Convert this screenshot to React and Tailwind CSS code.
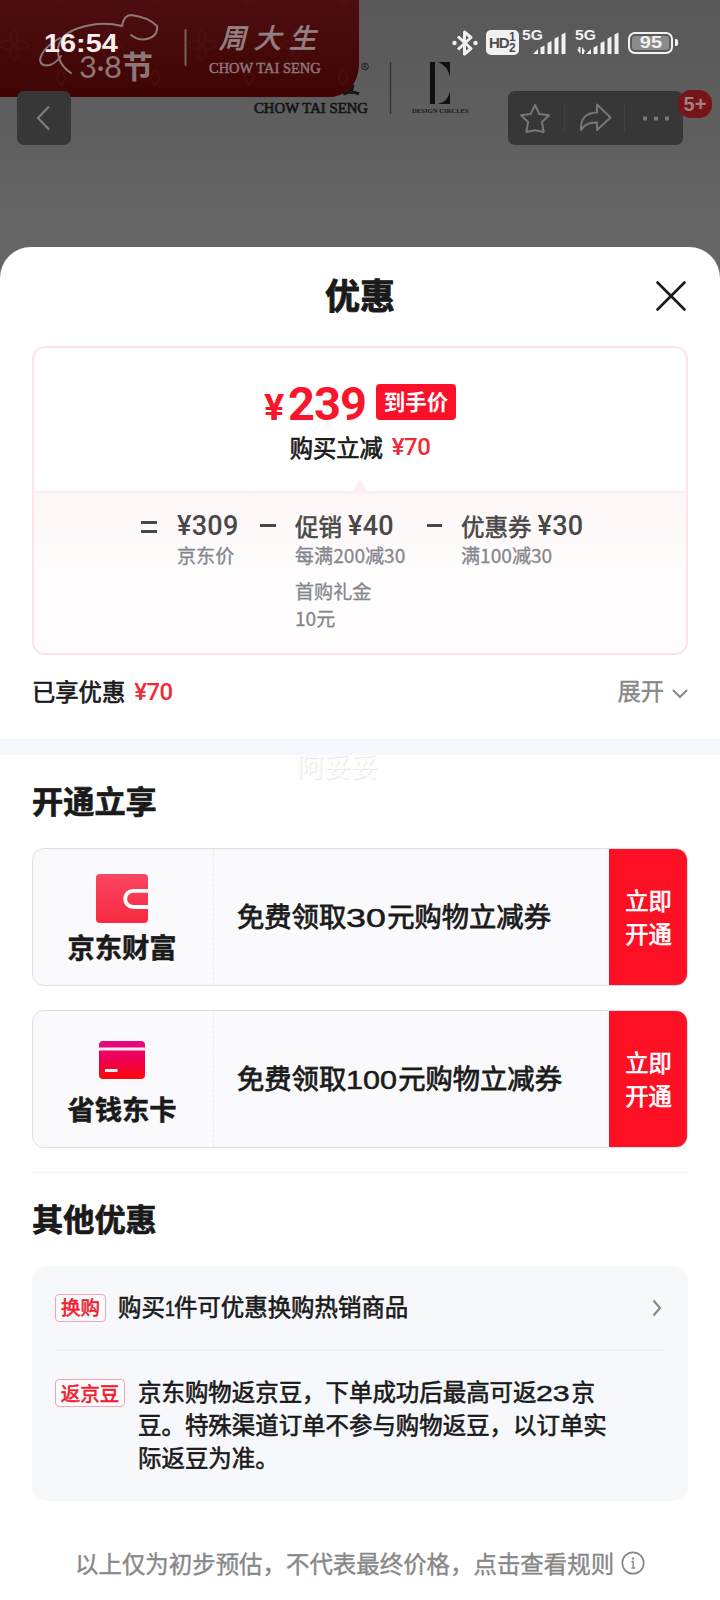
import React from "react";

const CJK = "font-['Noto_Sans_CJK_SC',sans-serif]";

/* Wide, squared numerals set inside Chinese text. */
function Wide({ children, box, scale }) {
  return (
    <span className={`inline-block h-[1em] align-baseline leading-none whitespace-nowrap [-webkit-text-stroke:0.5px] ${box}`}>
      <span className={`inline-block origin-left text-[0.95em] leading-none font-['Liberation_Sans',sans-serif] ${scale}`}>{children}</span>
    </span>
  );
}

function Banner() {
  return (
    <div className="absolute inset-x-0 top-0 h-[247px] overflow-hidden bg-linear-to-b from-[#585858] to-[#666666]">
      <div className="absolute top-[98px] left-[254px] text-[15px] leading-[20px] whitespace-nowrap text-[#161616] font-['Liberation_Serif',serif]">
        <span className="inline-block origin-left scale-x-[0.985] [-webkit-text-stroke:0.7px]">CHOW TAI SENG</span>
      </div>
      <svg className="absolute top-0 left-0" width="720" height="160" viewBox="0 0 720 160" fill="none">
        <defs>
          <linearGradient id="red" x1="0" y1="0" x2="0" y2="1">
            <stop offset="0" stopColor="#4c0e10" />
            <stop offset="1" stopColor="#410404" />
          </linearGradient>
          <pattern id="flora" width="94" height="80" patternUnits="userSpaceOnUse" patternTransform="translate(-33 2)">
            <path d="M47 28q8 7 0 15q-8-8 0-15zM47 58q8-7 0-15q-8 8 0 15zM32 43q7-8 15 0q-8 8-15 0zM62 43q-7-8-15 0q8 8 15 0z" stroke="#5c1718" strokeWidth="1.500" opacity=".35" />
            <path d="M0-12q8 7 0 15q-8-8 0-15zM94-12q8 7 0 15q-8-8 0-15zM0 68q8 7 0 15M94 68q-8 7 0 15" stroke="#5c1718" strokeWidth="1.500" opacity=".35" />
          </pattern>
        </defs>
        <path d="M344 94q7-2 8-10M353 85l-2 9M343 94q8-4 16 0" stroke="#161616" strokeWidth="3" />
        <path d="M0 0H359V66Q357 92 333 97H0Z" fill="url(#red)" />
        <path d="M0 0H359V66Q357 92 333 97H0Z" fill="url(#flora)" />
        <path d="M71 73Q57 64 58 48Q61 30 91 25Q106 22 122 26Q124 15 131 15Q148 17 157 26Q158 35 150 38Q140 42 131 35M60 38Q42 48 40 60Q41 67 50 65Q56 63 61 56" stroke="#8d7777" strokeWidth="2" strokeLinecap="round" />
        <path d="M185.500 30V65" stroke="#796060" strokeWidth="2" strokeLinecap="round" />
        <circle cx="365" cy="66.500" r="3.400" stroke="#242424" strokeWidth="1" />
        <path d="M364 68.500v-4h1.500q1 1.200 0 2.200h-1.500M365.500 66.700l1 1.800" stroke="#242424" strokeWidth=".8" />
        <path d="M390.500 62V114" stroke="#303030" strokeWidth="1.300" />
        <path d="M430 62h5v42h-5zM438 62h12v15q-2-11-12-15zM450 91v13h-12q10-2 12-13z" fill="#101010" />
      </svg>
      <div className="absolute top-[52px] left-[79px] flex items-center text-[#8d7777]">
        <span className="w-[43px] text-[31px] leading-[28px] font-['Lato',sans-serif] tracking-[-0.5px]">3·8</span>
        <span className={`mt-[-3px] text-[31px] leading-[28px] font-bold ${CJK}`}>节</span>
      </div>
      <div className={`absolute top-[20px] left-[219px] text-[27px] leading-[34px] tracking-[8px] italic whitespace-nowrap text-[#938080] [-webkit-text-stroke:0.8px] ${CJK}`}>周大生</div>
      <div className="absolute top-[58px] left-[209px] text-[15px] leading-[20px] whitespace-nowrap text-[#8d7777] font-['Liberation_Serif',serif]">
        <span className="inline-block origin-left scale-x-[0.965] [-webkit-text-stroke:0.5px]">CHOW TAI SENG</span>
      </div>
      <div className="absolute top-[106px] left-[412px] text-[7px] leading-[10px] font-bold whitespace-nowrap text-[#181818] font-['Liberation_Serif',serif]">
        <span className="inline-block origin-left scale-x-[0.95]">DESIGN CIRCLES</span>
      </div>
    </div>
  );
}

function Signal({ data }) {
  return (
    <span className="relative block h-[26px] w-[43px]">
      <span className="absolute top-[-1px] left-[-1px] origin-left scale-x-[1.12] text-[14px] leading-[12px] font-bold font-['Liberation_Sans',sans-serif]">5G</span>
      <svg className="absolute inset-0" width="44" height="26" viewBox="0 0 44 26" fill="#f1f1f1">
        <path d="M10 24l5-5v5zM17.500 24v-6.500l4-2V24zM24.500 24V13l4-2v13zM31.500 24V8.500l4-2V24zM38.500 24V4.500l4-2V24z" />
        {data && <path d="M1 19.500h1.500V17h2v7zM6 24v-7l3.500 4.500H8V24z" />}
      </svg>
    </span>
  );
}

function StatusBar() {
  return (
    <div className="flex h-[84px] items-center pt-[1px] pr-[42px] pl-[44px] text-[#f1f1f1]">
      <div className="w-[74px] whitespace-nowrap text-[26px] leading-[30px] font-bold text-[#fbeeee] font-['Liberation_Sans',sans-serif]">
        <span className="inline-block origin-left scale-x-[1.11]">16:54</span>
      </div>
      <svg className="ml-auto" width="26" height="28" viewBox="0 0 26 28" fill="none" stroke="#f1f1f1" strokeWidth="3">
        <path d="M6 7.500l13 12-6.500 5.500V3l6.500 5.500-13 12" strokeLinejoin="round" />
        <circle cx="2.500" cy="14" r="2.200" fill="#f1f1f1" stroke="none" />
        <circle cx="23.500" cy="14" r="2.200" fill="#f1f1f1" stroke="none" />
      </svg>
      <div className="ml-[8px] flex h-[25px] w-[33px] items-center rounded-[5px] bg-[#f1f1f1] pl-[3px] text-[#4c4c4c]">
        <span className="w-[20px] text-[15px] leading-none font-bold tracking-[-1px] font-['Liberation_Sans',sans-serif]">HD</span>
        <span className="flex flex-col text-[12px] leading-[11px] font-bold font-['Liberation_Sans',sans-serif]">
          <span>1</span>
          <span>2</span>
        </span>
      </div>
      <div className="ml-[4px] pt-[1px]"><Signal /></div>
      <div className="ml-[10px] pt-[1px]"><Signal data /></div>
      <div className="ml-[9px] flex items-center gap-[2px]">
        <div className="flex h-[22px] w-[45px] items-center justify-center rounded-[7px] border-2 border-[#f1f1f1] p-[2px]">
          <div className="flex h-full w-full items-center justify-center rounded-[3px] bg-[#8b8b8b] text-[16px] leading-none font-bold font-['Liberation_Sans',sans-serif]">
            <span className="scale-x-[1.25]">95</span>
          </div>
        </div>
        <div className="h-[7px] w-[3px] rounded-r-[2px] bg-[#f1f1f1]" />
      </div>
    </div>
  );
}

function NavBar() {
  return (
    <div className="mt-[7px] flex justify-between pr-[37px] pl-[17px]">
      <div className="flex size-[54px] items-center justify-center rounded-[7px] bg-[#373737]">
        <svg width="54" height="54" viewBox="0 0 54 54" fill="none" stroke="#7d7d7d" strokeWidth="2.200"><path d="M32 15.500L21 27l11 11.500" /></svg>
      </div>
      <div className="relative h-[54px] w-[175px] rounded-[7px] bg-[#373737]">
        <svg width="175" height="54" viewBox="0 0 175 54" fill="none" stroke="#777777" strokeWidth="2" strokeLinejoin="round">
          <path d="M27 14l4.300 9 9.700 1.300-7.100 6.700 1.800 10-8.700-1.800L18.300 41l1.800-10L13 24.300l9.700-1.300z" />
          <path d="M89 13.500l13.500 13L89 39v-7.500q-11.500-.5-16 7.500Q72 22 89 21.500z" />
          <path d="M56.500 13v28M116.500 13v28" stroke="#414141" strokeWidth="1.500" />
          <path d="M135 25.500h4v4h-4zM146 25.500h4v4h-4zM157 25.500h4v4h-4z" fill="#777777" stroke="none" />
        </svg>
        <div className="absolute top-[-1px] left-[170px] flex h-[28px] w-[34px] items-center justify-center rounded-[13px] bg-[#761417] text-[20px] leading-none font-bold text-[#a08080] font-['Liberation_Sans',sans-serif]">5+</div>
      </div>
    </div>
  );
}

function Term({ title, price, lines, width }) {
  return (
    <div className={`mt-[-1px] ${width}`}>
      <div className="flex h-[33px] items-center whitespace-nowrap text-[#484848]">
        {title && <span className="mr-[6px] text-[23.500px] leading-[32px] [-webkit-text-stroke:0.6px]">{title}</span>}
        <span className="text-[27px] leading-[32px] font-medium tracking-[0.3px] font-['Roboto',sans-serif]">¥{price}</span>
      </div>
      {lines.map((line, i) => (
        <div key={line} className={`text-[19.100px] leading-[27px] whitespace-nowrap text-[#85868d] [-webkit-text-stroke:0.3px] ${i === 1 ? "mt-[9px]" : ""}`}>{line}</div>
      ))}
    </div>
  );
}

function Yuan({ children }) {
  return <span className="pt-px text-[24px] font-medium text-[#f02a36] font-['Roboto',sans-serif] tracking-[-0.5px]">¥{children}</span>;
}

function PriceCard() {
  return (
    <div className="mx-[32px] h-[309px] overflow-hidden rounded-[13px] border-2 border-[#fde3e8]">
      <div className="flex h-[143px] flex-col items-center pt-[34px]">
        <div className="flex h-[40px] items-center">
          <div className="relative top-[4px] flex items-baseline leading-[40px] font-bold text-[#f9152b] font-['Roboto',sans-serif]">
            <span className="w-[24px] text-[36px]"><span className="inline-block origin-left scale-x-[1.05]">¥</span></span>
            <span className="text-[47px] tracking-[-1px]">239</span>
          </div>
          <div className="ml-[10px] flex h-[36px] w-[80px] items-center justify-center rounded-[4px] bg-[#fb1029] pb-[2px] text-[21.500px] font-bold text-white">到手价</div>
        </div>
        <div className="mt-[6px] flex items-center gap-[9px] leading-[36px]">
          <span className="text-[23.300px] text-[#1a1a1a] [-webkit-text-stroke:0.7px]">购买立减</span>
          <Yuan>70</Yuan>
        </div>
      </div>
      <div className="relative h-[162px] border-t-2 border-[#fbeef1] bg-linear-to-b from-[#fef7f8] via-[#fefcfc] via-50% to-[#fffdfd] pt-[17px] pl-[107px]">
        <svg className="absolute top-[-14px] left-[314px]" width="24" height="15" viewBox="0 0 24 15">
          <path d="M0 13.500Q4 13 6 9l6-9 6 9q2 4 6 4.500V15H0z" fill="#fdf0f3" />
        </svg>
        <div className="flex">
          <span className="mt-[11px] flex h-[12px] w-[16px] flex-col justify-between"><i className="h-[3px] bg-[#484848]" /><i className="h-[3px] bg-[#484848]" /></span>
          <Term width="ml-[20px] w-[83px]" price="309" lines={["京东价"]} />
          <span className="mt-[14px] h-[3px] w-[16px] bg-[#484848]" />
          <Term width="ml-[19px] w-[132px]" title="促销" price="40" lines={["每满200减30", "首购礼金", "10元"]} />
          <span className="mt-[14px] h-[3px] w-[15px] bg-[#484848]" />
          <Term width="ml-[19px]" title="优惠券" price="30" lines={["满100减30"]} />
        </div>
      </div>
    </div>
  );
}

function WalletIcon() {
  return (
    <svg width="52" height="49" viewBox="0 0 51 48" fill="none">
      <defs>
        <linearGradient id="wallet" x1="0" y1="0" x2="0" y2="1">
          <stop offset="0" stopColor="#fb455f" />
          <stop offset="1" stopColor="#f92942" />
        </linearGradient>
      </defs>
      <rect width="51" height="48" rx="4" fill="url(#wallet)" />
      <path d="M52 16.500H36.500a7.900 7.900 0 0 0 0 15.800H52" stroke="#fff" strokeWidth="3.800" />
    </svg>
  );
}

function BankCardIcon() {
  return (
    <svg width="46" height="38" viewBox="0 0 46 38">
      <defs>
        <linearGradient id="bank" x1="0" y1="0" x2="0" y2="1">
          <stop offset="0" stopColor="#e50a81" />
          <stop offset=".5" stopColor="#ee0052" />
          <stop offset="1" stopColor="#fa0908" />
        </linearGradient>
      </defs>
      <rect width="46" height="38" rx="4" fill="url(#bank)" />
      <path d="M0 6.500h46v3H0zM6 28h12.500v3H6z" fill="#fff" opacity=".92" />
    </svg>
  );
}

function Offer({ icon, label, children }) {
  return (
    <div className="mx-[32px] flex h-[138px] overflow-hidden rounded-[12px] border border-[#dfdfe4] bg-[#fafafc]">
      <div className="flex w-[181px] flex-col items-center border-r border-dashed border-[#ececf0] pt-[25px] pr-[2px]">
        <div className="flex h-[48px] items-center">{icon}</div>
        <div className="mt-[4px] text-[27.300px] leading-[40px] font-bold text-[#1a1a1a] [-webkit-text-stroke:0.5px]">{label}</div>
      </div>
      <div className="flex flex-1 items-center pb-[4px] pl-[23px] whitespace-nowrap text-[27.300px] leading-[40px] text-[#1a1a1a] [-webkit-text-stroke:0.8px]">
        <div>{children}</div>
      </div>
      <div className="-my-px -mr-px flex w-[79px] items-center justify-center bg-[#fd1024] pb-px text-center text-[23.300px] leading-[33px] text-white [-webkit-text-stroke:0.7px]">
        <div>立即<br />开通</div>
      </div>
    </div>
  );
}

function Tag({ children, box }) {
  return <span className={`flex h-[28px] shrink-0 items-center justify-center rounded-[4px] border border-[#f9a3b0] bg-white/40 pb-px text-[19.500px] leading-none text-[#f02030] [-webkit-text-stroke:0.6px] ${box}`}>{children}</span>;
}

export default function App() {
  return (
    <div className={`relative flex h-[1600px] w-[720px] flex-col overflow-hidden bg-[#666666] ${CJK}`}>
      <Banner />
      <div className="relative h-[247px]">
        <StatusBar />
        <NavBar />
      </div>
      <div className="relative flex h-[1353px] flex-col rounded-t-[31px] bg-white">
        <div className="relative flex h-[99px] items-center justify-center pb-[6px]">
          <h1 className="text-[35px] leading-[50px] font-bold text-[#1a1a1a] [-webkit-text-stroke:0.9px]">优惠</h1>
          <svg className="absolute top-[33px] right-[33px]" width="32" height="32" viewBox="0 0 32 32" stroke="#1a1a1a" strokeWidth="2.600" strokeLinecap="round"><path d="M2.500 2.500l27 27M29.500 2.500l-27 27" /></svg>
        </div>
        <PriceCard />
        <div className="mx-[32px] flex h-[84px] items-center justify-between pb-[12px] text-[23.300px] leading-[36px]">
          <div className="flex items-center gap-[9px]">
            <span className="mt-[-1px] text-[#1a1a1a] [-webkit-text-stroke:0.7px]">已享优惠</span>
            <Yuan>70</Yuan>
          </div>
          <div className="flex items-center gap-[8px] text-[#888888] [-webkit-text-stroke:0.4px]">
            <span className="mt-[-2px]">展开</span>
            <svg width="16" height="10" viewBox="0 0 16 10" fill="none" stroke="#888888" strokeWidth="2" className="mt-[6px]"><path d="M1 1l7 7 7-7" /></svg>
          </div>
        </div>
        <div className="h-[16px] bg-[#f7f8fd]" />
        <div className="relative h-[93px] pl-[32px]">
          <div className="absolute top-[-7px] left-[297px] text-[27px] leading-[36px] text-[#fdfdfd] [text-shadow:1px_1px_1px_#e6e6e6]">阿妥妥</div>
          <h2 className="pt-[25px] text-[31.200px] leading-[40px] font-bold text-[#1a1a1a] [-webkit-text-stroke:0.7px]">开通立享</h2>
        </div>
        <Offer icon={<WalletIcon />} label="京东财富">
          免费领取<Wide box="w-[41px]" scale="scale-x-[1.38]">30</Wide>元购物立减券
        </Offer>
        <div className="h-[24px]" />
        <Offer icon={<BankCardIcon />} label="省钱东卡">
          免费领取<Wide box="w-[52px]" scale="scale-x-[1.18]">100</Wide>元购物立减券
        </Offer>
        <div className="mx-[32px] mt-[24px] h-px bg-[#f5f5f7]" />
        <h2 className="h-[93px] pt-[25px] pl-[32px] text-[31.200px] leading-[40px] font-bold text-[#1a1a1a] [-webkit-text-stroke:0.7px]">其他优惠</h2>
        <div className="mx-[32px] h-[235px] rounded-[16px] bg-[#f7f8fc] px-[23px] text-[23.450px] leading-[33px] text-[#1a1a1a]">
          <div className="flex h-[85px] items-center border-b-2 border-[#f0f0f4]">
            <Tag box="w-[51px]">换购</Tag>
            <span className="mt-[-2px] ml-[12px] [-webkit-text-stroke:0.6px]">购买<Wide box="w-[9px]" scale="scale-x-[0.8]">1</Wide>件可优惠换购热销商品</span>
            <svg className="mr-[3px] ml-auto" width="10" height="18" viewBox="0 0 10 18" fill="none" stroke="#888888" strokeWidth="2.200"><path d="M1.500 1.500L8 9l-6.500 7.500" /></svg>
          </div>
          <div className="flex pt-[24px]">
            <Tag box="mt-[4px] w-[70px]">返京豆</Tag>
            <div className="ml-[13px] whitespace-nowrap [-webkit-text-stroke:0.6px]">
              <div className="h-[33px]">京东购物返京豆，下单成功后最高可返<Wide box="w-[35px]" scale="scale-x-[1.36]">23</Wide>京</div>
              <div>豆。特殊渠道订单不参与购物返豆，以订单实</div>
              <div>际返豆为准。</div>
            </div>
          </div>
        </div>
        <div className="mt-[44px] flex items-center pl-[75px] text-[23.450px] leading-[36px] whitespace-nowrap text-[#888888] [-webkit-text-stroke:0.4px]">
          以上仅为初步预估，不代表最终价格，点击查看规则
          <svg className="ml-[7px]" width="24" height="24" viewBox="0 0 24 24" fill="none" stroke="#888888" strokeWidth="1.700">
            <circle cx="12" cy="12" r="10.700" />
            <path d="M10.500 10.500h1.700v6M10.500 17h3.500" strokeWidth="1.400" />
            <path d="M11 6.500h2v2h-2z" fill="#888888" stroke="none" />
          </svg>
        </div>
      </div>
    </div>
  );
}
